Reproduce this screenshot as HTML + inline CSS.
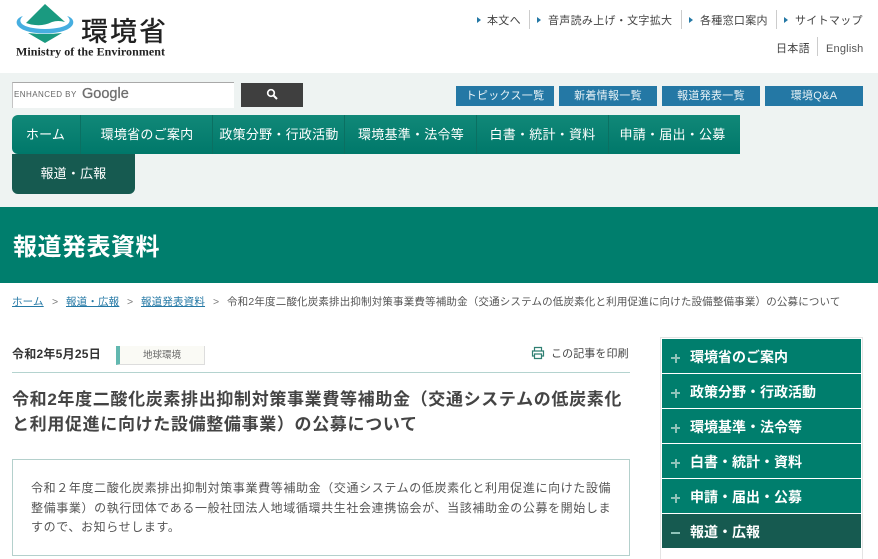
<!DOCTYPE html>
<html lang="ja"><head><meta charset="utf-8"><title>報道発表資料</title>
<style>
*{margin:0;padding:0;box-sizing:border-box}
html,body{width:878px;height:559px;overflow:hidden;background:#fff}
body{position:relative;font-family:"Liberation Sans","Noto Sans CJK JP",sans-serif;color:#333}
.a{position:absolute;white-space:nowrap}
.t{font-size:11px;color:#444;letter-spacing:.3px;line-height:14px;top:13px}
.tri{position:absolute;top:17px;width:0;height:0;border-left:4px solid #2478a5;border-top:3px solid transparent;border-bottom:3px solid transparent}
.sep{position:absolute;width:1px;background:#ccc}
.b{position:absolute;top:86px;width:98px;height:20px;background:#2478a5;color:#e8f2f6;font-size:11px;line-height:20px;text-align:center;letter-spacing:.3px}
.n{position:absolute;top:115px;height:39px;line-height:40px;text-align:center;color:#fff;font-size:13px;letter-spacing:.25px;background:linear-gradient(#118878,#00786a);border-left:1px solid #0b7062}
.s{position:absolute;left:662px;width:199px;height:34px;background:#007e6d;color:#fff;font-size:14px;font-weight:700;line-height:36px;padding-left:28px}
.s i{position:absolute;left:9px;top:18px;width:9px;height:2px;background:#8fc4ba}
.s i.v:after{content:"";position:absolute;left:3.5px;top:-3.5px;width:2px;height:9px;background:#8fc4ba}
.c{font-size:10.5px;line-height:14px;top:295px;letter-spacing:.17px;color:#555}
.l{color:#2478a5;text-decoration:underline}
.p{left:31px;font-size:12px;line-height:19px;color:#555;letter-spacing:.62px}
</style></head><body>
<svg class="a" style="left:0;top:0" width="170" height="62" viewBox="0 0 170 62">
<path d="M45 4 L65 22 Q58 20 52 22 Q44 26 35 25 Q30 24.500 26 23 Z" fill="#1a9a80"/>
<path d="M28 33 Q45 35 62 33 L45 43 Z" fill="#1a9a80"/>
<path d="M23 16 C12 19 13 33 45 33.500 C77 33 78 19 67 16 C73 21 70 28.500 45 29 C20 28.500 17 21 23 16 Z" fill="#46aee0"/>
<text x="81" y="41" font-family="'Noto Sans CJK JP',sans-serif" font-size="27" font-weight="500" fill="#222" textLength="85">環境省</text>
<text x="16" y="55.500" font-family="'Liberation Serif',serif" font-size="12" font-weight="700" fill="#222" textLength="149">Ministry of the Environment</text>
</svg>

<i class="tri" style="left:477px"></i><div class="a t" style="left:487px;top:14px">本文へ</div><div class="sep" style="left:529px;top:10px;height:19px"></div>
<i class="tri" style="left:537px"></i><div class="a t" style="left:548px;top:14px">音声読み上げ・文字拡大</div><div class="sep" style="left:681px;top:10px;height:19px"></div>
<i class="tri" style="left:689px"></i><div class="a t" style="left:700px;top:14px">各種窓口案内</div><div class="sep" style="left:776px;top:10px;height:19px"></div>
<i class="tri" style="left:784px"></i><div class="a t" style="left:795px;top:14px">サイトマップ</div>
<div class="a t" style="left:776px;top:42px">日本語</div><div class="sep" style="left:817px;top:37px;height:19px"></div>
<div class="a t" style="left:826px;top:42px;letter-spacing:.2px;color:#555">English</div>

<div class="a" style="left:0;top:73px;width:878px;height:134px;background:#eef3f2"></div>
<div class="a" style="left:12px;top:82px;width:222px;height:26px;background:#fff;border-top:1px solid #a9a9a9;border-left:1px solid #c4c4c4"></div>
<div class="a" style="left:14px;top:90px;font-size:8px;line-height:10px;color:#666;letter-spacing:.45px">ENHANCED BY</div>
<div class="a" style="left:82px;top:85px;font-size:14.500px;line-height:18px;color:#6f6f6f;-webkit-text-stroke:.3px #6f6f6f">Google</div>
<div class="a" style="left:241px;top:83px;width:62px;height:24px;background:#3f3f3f"></div>
<svg class="a" style="left:266px;top:88px" width="13" height="13" viewBox="0 0 13 13"><circle cx="5" cy="5" r="3.300" fill="none" stroke="#fff" stroke-width="1.700"/><path d="M7.500 7.500 L11 11" stroke="#fff" stroke-width="2"/></svg>
<div class="b" style="left:456px">トピックス一覧</div>
<div class="b" style="left:559px">新着情報一覧</div>
<div class="b" style="left:662px">報道発表一覧</div>
<div class="b" style="left:765px">環境Q&amp;A</div>

<div class="n" style="left:12px;width:69px;border-left:0;border-radius:6px 0 0 6px;padding-right:2px">ホーム</div>
<div class="n" style="left:80px;width:133px">環境省のご案内</div>
<div class="n" style="left:212px;width:133px">政策分野・行政活動</div>
<div class="n" style="left:344px;width:133px">環境基準・法令等</div>
<div class="n" style="left:476px;width:132px">白書・統計・資料</div>
<div class="n" style="left:608px;width:132px;padding-right:4px">申請・届出・公募</div>
<div class="a" style="left:12px;top:154px;width:123px;height:40px;background:#165a50;color:#fff;font-size:13px;line-height:40px;text-align:center;border-radius:0 0 6px 6px;letter-spacing:.2px">報道・広報</div>

<div class="a" style="left:0;top:207px;width:878px;height:76px;background:#007e6d"></div>
<div class="a" style="left:13px;top:232px;font-size:24px;line-height:32px;font-weight:700;color:#fff;letter-spacing:.5px">報道発表資料</div>

<div class="a c" style="left:12px"><span class="l">ホーム</span></div><div class="a c" style="left:52px;color:#777">&gt;</div>
<div class="a c" style="left:66px"><span class="l">報道・広報</span></div><div class="a c" style="left:127px;color:#777">&gt;</div>
<div class="a c" style="left:141px"><span class="l">報道発表資料</span></div><div class="a c" style="left:213px;color:#777">&gt;</div>
<div class="a c" style="left:227px">令和2年度二酸化炭素排出抑制対策事業費等補助金（交通システムの低炭素化と利用促進に向けた設備整備事業）の公募について</div>

<div class="a" style="left:12px;top:345px;font-size:12px;line-height:18px;font-weight:700;color:#333;letter-spacing:.25px">令和2年5月25日</div>
<div class="a" style="left:116px;top:346px;width:89px;height:19px;background:#fafaf5;border-right:1px solid #ddd;border-bottom:1px solid #ddd;border-left:4px solid #62b8b0;font-size:9.500px;line-height:20px;text-align:center;color:#666">地球環境</div>
<svg class="a" style="left:531px;top:346px" width="14" height="14" viewBox="0 0 14 14" fill="none" stroke="#2f7f72" stroke-width="1.200"><path d="M3.500 5V1.500h7V5M3 10H1.500V5h11v5H11"/><path d="M3.500 8h7v4.500h-7z"/></svg>
<div class="a" style="left:551px;top:347px;font-size:11px;line-height:14px;color:#444;letter-spacing:.1px">この記事を印刷</div>
<div class="a" style="left:12px;top:372px;width:618px;height:1px;background:#b4d3cf"></div>

<div class="a" style="left:12px;top:387px;font-size:17px;line-height:25px;font-weight:700;color:#444;letter-spacing:.66px">令和2年度二酸化炭素排出抑制対策事業費等補助金（交通システムの低炭素化<br>と利用促進に向けた設備整備事業）の公募について</div>

<div class="a" style="left:12px;top:459px;width:618px;height:97px;border:1px solid #b4d0cc"></div>
<div class="a p" style="top:479px">令和２年度二酸化炭素排出抑制対策事業費等補助金（交通システムの低炭素化と利用促進に向けた設備</div>
<div class="a p" style="top:499px">整備事業）の執行団体である一般社団法人地域循環共生社会連携協会が、当該補助金の公募を開始しま</div>
<div class="a p" style="top:518px">すので、お知らせします。</div>

<div class="a" style="left:660px;top:337px;width:203px;height:222px;border:1px solid #e4e4e4;border-bottom:0"></div>
<div class="s" style="top:339px"><i class="v"></i>環境省のご案内</div>
<div class="s" style="top:374px"><i class="v"></i>政策分野・行政活動</div>
<div class="s" style="top:409px"><i class="v"></i>環境基準・法令等</div>
<div class="s" style="top:444px"><i class="v"></i>白書・統計・資料</div>
<div class="s" style="top:479px"><i class="v"></i>申請・届出・公募</div>
<div class="s" style="top:514px;background:#165a50"><i></i>報道・広報</div>
</body></html>
